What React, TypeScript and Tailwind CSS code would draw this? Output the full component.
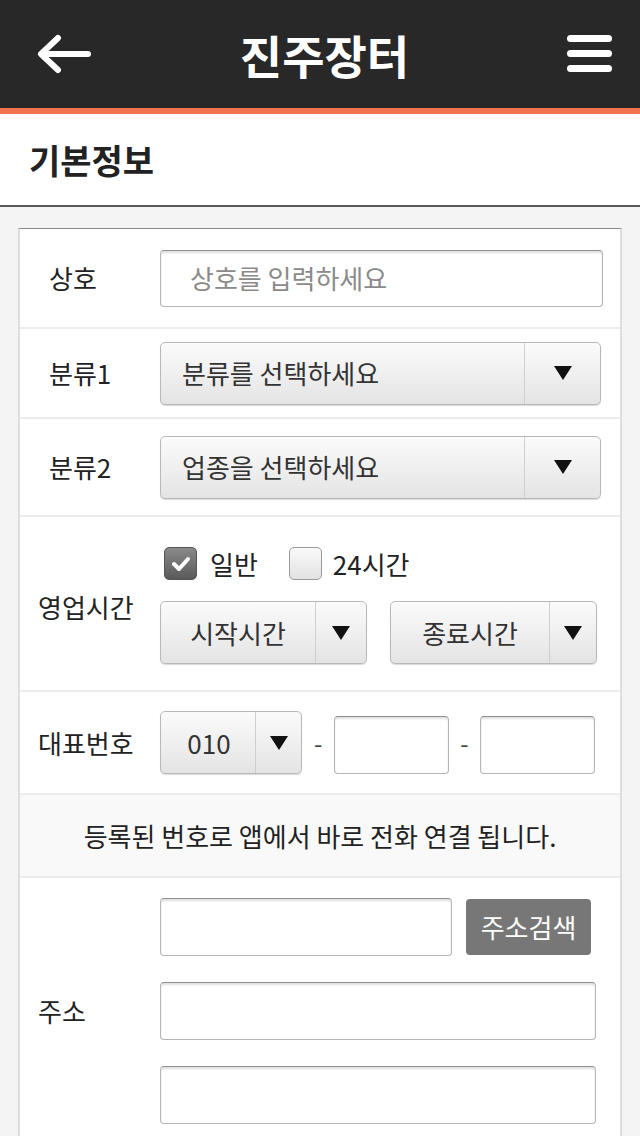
const font = { fontFamily: '"Noto Sans CJK KR", "Noto Sans", sans-serif' };

const Arrow = () => (
    <svg width="18" height="14" viewBox="0 0 18 14">
        <polygon points="0,0 18,0 9,14" fill="#111" />
    </svg>
);

const Select = ({ text, className, textClass, arrowW }: { text: string; className: string; textClass: string; arrowW: string }) => (
    <div className={"flex rounded-[5px] border border-[#b8b8b8] bg-gradient-to-b from-[#fbfbfb] to-[#e4e4e4] shadow-[0_1px_1px_rgba(0,0,0,0.15)] " + className}>
        <div className={"flex flex-1 items-center text-[26px] leading-none text-[#333] " + textClass}>{text}</div>
        <div className={"flex items-center justify-center border-l border-[#cfcfcf] " + arrowW}>
            <Arrow />
        </div>
    </div>
);

const TextBox = ({ className, children }: { className: string; children?: React.ReactNode }) => (
    <div className={"flex items-center rounded-[4px] border border-[#b5b5b5] border-t-[#8f8f8f] bg-white shadow-[inset_0_2px_2px_rgba(0,0,0,0.12)] " + className}>
        {children}
    </div>
);

const Label = ({ text, className }: { text: string; className: string }) => (
    <div className={"w-[140px] shrink-0 text-[26px] leading-none text-[#222] " + className}>{text}</div>
);

export default function App() {
    return (
        <div className="min-h-[1136px] bg-[#f4f4f4]" style={font}>
            <header className="grid h-[114px] grid-cols-[1fr_auto_1fr] items-center border-b-[6px] border-[#f5724e] bg-[#282828] pl-[36px] pr-[27px]">
                <svg width="56" height="40" viewBox="0 0 56 40" fill="none" stroke="white" strokeWidth="6" strokeLinecap="round" strokeLinejoin="round">
                    <path d="M52 20H6M22 4L5 20l17 16" />
                </svg>
                <h1 className="text-[46px] font-bold leading-none text-white">진주장터</h1>
                <svg className="justify-self-end" width="47" height="40" viewBox="0 0 47 40" fill="white">
                    <rect x="1" y="1" width="45" height="7" rx="3.5" />
                    <rect x="1" y="16" width="45" height="7" rx="3.5" />
                    <rect x="1" y="31" width="45" height="7" rx="3.5" />
                </svg>
            </header>

            <div className="flex h-[93px] items-center border-b-2 border-[#5a5a5a] bg-white pl-[29px]">
                <h2 className="text-[34px] font-bold leading-none text-[#222]">기본정보</h2>
            </div>

            <div className="mx-[18px] mt-[21px] border-x-2 border-t border-[#dedede] border-t-[#8a8a8a] bg-white">
                {/* 상호 */}
                <div className="flex h-[100px] items-center border-b-2 border-[#ececec]">
                    <Label text="상호" className="pl-[29px]" />
                    <TextBox className="h-[57px] w-[443px] pl-[29px]">
                        <span className="text-[26px] leading-none text-[#8a8a8a]">상호를 입력하세요</span>
                    </TextBox>
                </div>

                {/* 분류1 */}
                <div className="flex h-[90px] items-center border-b-2 border-[#ececec]">
                    <Label text="분류1" className="pl-[29px]" />
                    <Select text="분류를 선택하세요" className="h-[63px] w-[441px]" textClass="pl-[21px]" arrowW="w-[76px]" />
                </div>

                {/* 분류2 */}
                <div className="flex h-[98px] items-center border-b-2 border-[#ececec]">
                    <Label text="분류2" className="pl-[29px]" />
                    <Select text="업종을 선택하세요" className="h-[63px] w-[441px]" textClass="pl-[21px]" arrowW="w-[76px]" />
                </div>

                {/* 영업시간 */}
                <div className="flex h-[175px] items-center border-b-2 border-[#ececec]">
                    <Label text="영업시간" className="pl-[18px] pt-[6px]" />
                    <div className="flex flex-col pt-[4px]">
                        <div className="flex items-center pl-[4px]">
                            <span className="flex h-[33px] w-[33px] items-center justify-center rounded-[5px] border border-[#555] bg-gradient-to-b from-[#8a8a8a] to-[#5a5a5a]">
                                <svg width="20" height="16" viewBox="0 0 20 16" fill="none" stroke="white" strokeWidth="4" strokeLinecap="round" strokeLinejoin="round">
                                    <path d="M3 8l5 5 9-10" />
                                </svg>
                            </span>
                            <span className="ml-[13px] text-[26px] leading-none text-[#222]">일반</span>
                            <span className="ml-[31px] h-[33px] w-[33px] rounded-[5px] border border-[#9a9a9a] bg-gradient-to-b from-[#fafafa] to-[#e2e2e2]" />
                            <span className="ml-[11px] text-[26px] leading-none text-[#222]">24시간</span>
                        </div>
                        <div className="mt-[21px] flex gap-[23px]">
                            <Select text="시작시간" className="h-[63px] w-[207px]" textClass="justify-center" arrowW="w-[51px]" />
                            <Select text="종료시간" className="h-[63px] w-[207px]" textClass="justify-center" arrowW="w-[47px]" />
                        </div>
                    </div>
                </div>

                {/* 대표번호 */}
                <div className="flex h-[103px] items-center border-b-2 border-[#ececec]">
                    <Label text="대표번호" className="pl-[18px]" />
                    <Select text="010" className="h-[63px] w-[142px]" textClass="justify-center pl-[2px]" arrowW="w-[46px]" />
                    <span className="mx-[12px] text-[24px] leading-none text-[#444]">-</span>
                    <TextBox className="mt-[5px] h-[58px] w-[115px]" />
                    <span className="mx-[11px] text-[24px] leading-none text-[#444]">-</span>
                    <TextBox className="mt-[5px] h-[58px] w-[115px]" />
                </div>

                {/* 안내 */}
                <div className="flex h-[83px] items-center justify-center border-b-2 border-[#ececec] bg-[#f9f9f9]">
                    <p className="text-[26px] leading-none text-[#222]">등록된 번호로 앱에서 바로 전화 연결 됩니다.</p>
                </div>

                {/* 주소 */}
                <div className="flex items-center pb-[20px] pt-[20px]">
                    <Label text="주소" className="pl-[18px]" />
                    <div className="flex flex-col gap-[26px]">
                        <div className="flex items-center">
                            <TextBox className="h-[58px] w-[292px]" />
                            <button className="ml-[14px] h-[56px] w-[125px] rounded-[4px] bg-[#777] text-[26px] leading-none text-white">주소검색</button>
                        </div>
                        <TextBox className="h-[58px] w-[436px]" />
                        <TextBox className="h-[58px] w-[436px]" />
                    </div>
                </div>
            </div>
        </div>
    );
}
